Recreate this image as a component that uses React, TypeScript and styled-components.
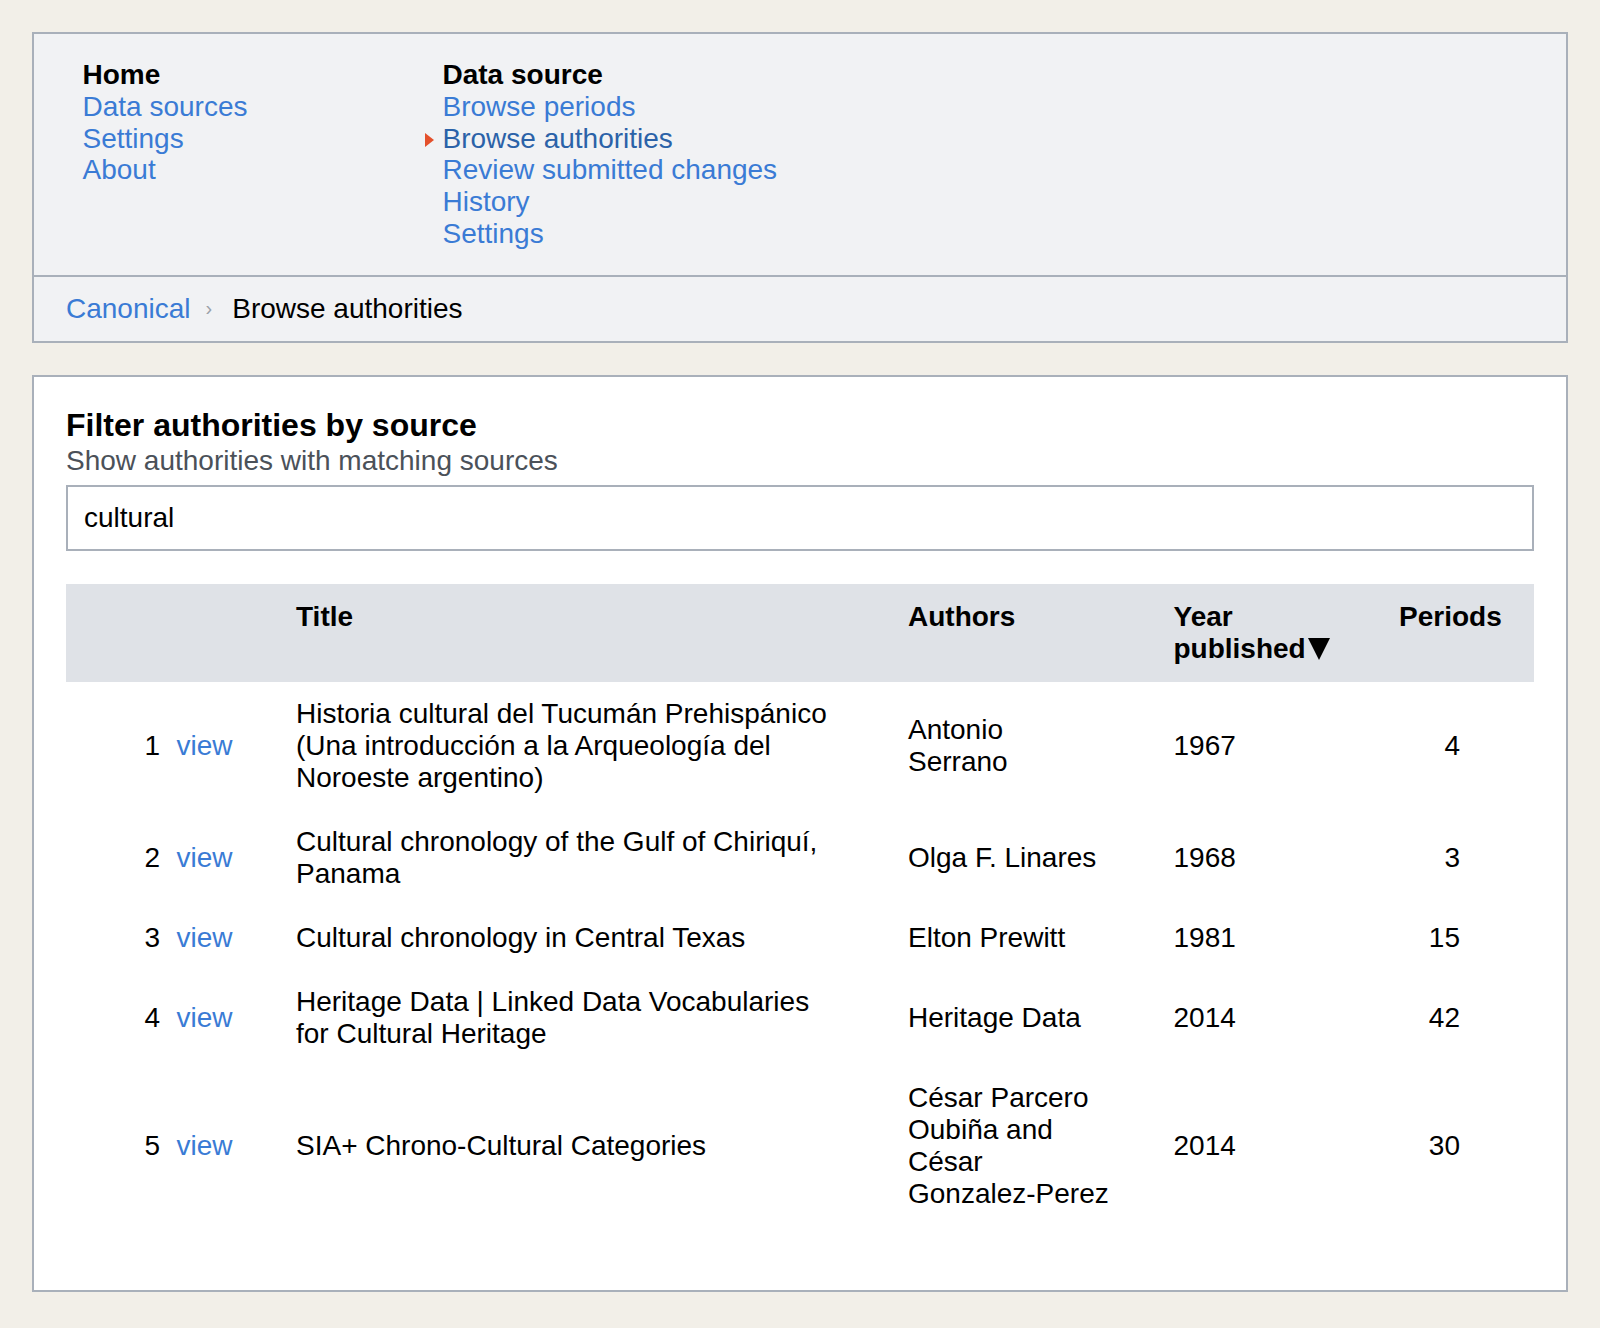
import React from 'react';
import styled, { createGlobalStyle, css } from 'styled-components';

const GlobalStyle = createGlobalStyle`
  html, body {
    margin: 0;
    padding: 0;
    background: #f2efe8;
  }
  body {
    font-family: "Liberation Sans", Helvetica, Arial, sans-serif;
    color: #000;
  }
  * { box-sizing: border-box; }
`;

const Page = styled.div`
  padding: 32px;
  display: flex;
  flex-direction: column;
  gap: 32px;
`;

const TopPanel = styled.header`
  background: #f1f2f4;
  border: 2px solid #a9b0ba;
`;

const Nav = styled.nav`
  display: grid;
  grid-template-columns: 360px auto;
  padding: 25px 0 25.5px 48.5px;
  border-bottom: 2px solid #a9b0ba;
`;

const NavGroup = styled.ul`
  list-style: none;
  margin: 0;
  padding: 0;
  font-size: 28px;
  line-height: 31.8px;
`;

const NavTitle = styled.li`
  font-weight: bold;
  color: #000;
`;

const NavItem = styled.li<{ $active?: boolean }>`
  position: relative;
  ${(p) =>
    p.$active &&
    css`
      &::before {
        content: '';
        position: absolute;
        left: -18px;
        top: 10px;
        border-left: 9px solid #e4502b;
        border-top: 7px solid transparent;
        border-bottom: 7px solid transparent;
      }
    `}
`;

const Link = styled.a<{ $active?: boolean }>`
  color: ${(p) => (p.$active ? '#2b62a8' : '#3a7bd5')};
  text-decoration: none;
  cursor: pointer;
`;

const Breadcrumb = styled.div`
  display: flex;
  align-items: center;
  padding: 16px 32px;
  font-size: 28px;
  line-height: 31.4px;
`;

const Sep = styled.span`
  color: #9aa0a8;
  font-size: 20px;
  margin: 0 20px 0 15px;
`;

const Main = styled.main`
  background: #fff;
  border: 2px solid #a9b0ba;
  padding: 32px 32px 64px;
`;

const Heading = styled.h2`
  margin: 0 0 4px;
  font-size: 32px;
  line-height: 32px;
  font-weight: bold;
`;

const Sub = styled.p`
  margin: 0;
  font-size: 28px;
  line-height: 32px;
  color: #4b5159;
`;

const SearchInput = styled.input`
  display: block;
  width: 100%;
  height: 66px;
  margin-top: 8px;
  padding: 0 16px;
  border: 2px solid #a9b0ba;
  border-radius: 0;
  background: #fff;
  font-family: inherit;
  font-size: 28px;
  color: #000;
  outline: none;
`;

const Table = styled.table`
  width: 100%;
  margin-top: 33px;
  border-collapse: collapse;
  table-layout: fixed;
  font-size: 28px;
  line-height: 32px;
`;

const HeadRow = styled.tr`
  background: #dfe2e7;
`;

const Th = styled.th<{ $pad?: string }>`
  text-align: left;
  vertical-align: top;
  font-weight: bold;
  padding: ${(p) => p.$pad ?? '17px 16px'};
`;

const Cell = styled.td<{ $align?: 'left' | 'right'; $pad?: string }>`
  text-align: ${(p) => p.$align ?? 'left'};
  vertical-align: middle;
  padding: ${(p) => p.$pad ?? '16px'};
`;

const SortArrow = styled.span`
  display: inline-block;
  width: 0;
  height: 0;
  margin-left: 2px;
  border-left: 11.5px solid transparent;
  border-right: 11.5px solid transparent;
  border-top: 22px solid #000;
  vertical-align: -2px;
`;

type Row = { title: string; authors: string; year: number; periods: number };

const rows: Row[] = [
  {
    title: 'Historia cultural del Tucumán Prehispánico (Una introducción a la Arqueología del Noroeste argentino)',
    authors: 'Antonio Serrano',
    year: 1967,
    periods: 4,
  },
  { title: 'Cultural chronology of the Gulf of Chiriquí, Panama', authors: 'Olga F. Linares', year: 1968, periods: 3 },
  { title: 'Cultural chronology in Central Texas', authors: 'Elton Prewitt', year: 1981, periods: 15 },
  {
    title: 'Heritage Data | Linked Data Vocabularies for Cultural Heritage',
    authors: 'Heritage Data',
    year: 2014,
    periods: 42,
  },
  {
    title: 'SIA+ Chrono-Cultural Categories',
    authors: 'César Parcero Oubiña and César Gonzalez-Perez',
    year: 2014,
    periods: 30,
  },
];

export default function App() {
  return (
    <>
      <GlobalStyle />
      <Page>
        <TopPanel>
          <Nav>
            <NavGroup>
              <NavTitle>Home</NavTitle>
              <NavItem><Link>Data sources</Link></NavItem>
              <NavItem><Link>Settings</Link></NavItem>
              <NavItem><Link>About</Link></NavItem>
            </NavGroup>
            <NavGroup>
              <NavTitle>Data source</NavTitle>
              <NavItem><Link>Browse periods</Link></NavItem>
              <NavItem $active><Link $active>Browse authorities</Link></NavItem>
              <NavItem><Link>Review submitted changes</Link></NavItem>
              <NavItem><Link>History</Link></NavItem>
              <NavItem><Link>Settings</Link></NavItem>
            </NavGroup>
          </Nav>
          <Breadcrumb>
            <Link>Canonical</Link>
            <Sep>›</Sep>
            <span>Browse authorities</span>
          </Breadcrumb>
        </TopPanel>

        <Main>
          <Heading>Filter authorities by source</Heading>
          <Sub>Show authorities with matching sources</Sub>
          <SearchInput defaultValue="cultural" />

          <Table>
            <colgroup>
              <col style={{ width: 100 }} />
              <col style={{ width: 114 }} />
              <col style={{ width: 612 }} />
              <col style={{ width: 233.5 }} />
              <col style={{ width: 257.5 }} />
              <col style={{ width: 151 }} />
            </colgroup>
            <thead>
              <HeadRow>
                <Th />
                <Th />
                <Th>Title</Th>
                <Th>Authors</Th>
                <Th $pad="17px 16px 17px 48px">
                  Year published<SortArrow />
                </Th>
                <Th>Periods</Th>
              </HeadRow>
            </thead>
            <tbody>
              {rows.map((r, i) => (
                <tr key={i}>
                  <Cell $align="right" $pad="16px 6px 16px 0">{i + 1}</Cell>
                  <Cell $pad="16px 0 16px 10.5px"><Link>view</Link></Cell>
                  <Cell $pad="16px 54px 16px 16px">{r.title}</Cell>
                  <Cell>{r.authors}</Cell>
                  <Cell $pad="16px 16px 16px 48px">{r.year}</Cell>
                  <Cell $align="right" $pad="16px 74px 16px 16px">{r.periods}</Cell>
                </tr>
              ))}
            </tbody>
          </Table>
        </Main>
      </Page>
    </>
  );
}
